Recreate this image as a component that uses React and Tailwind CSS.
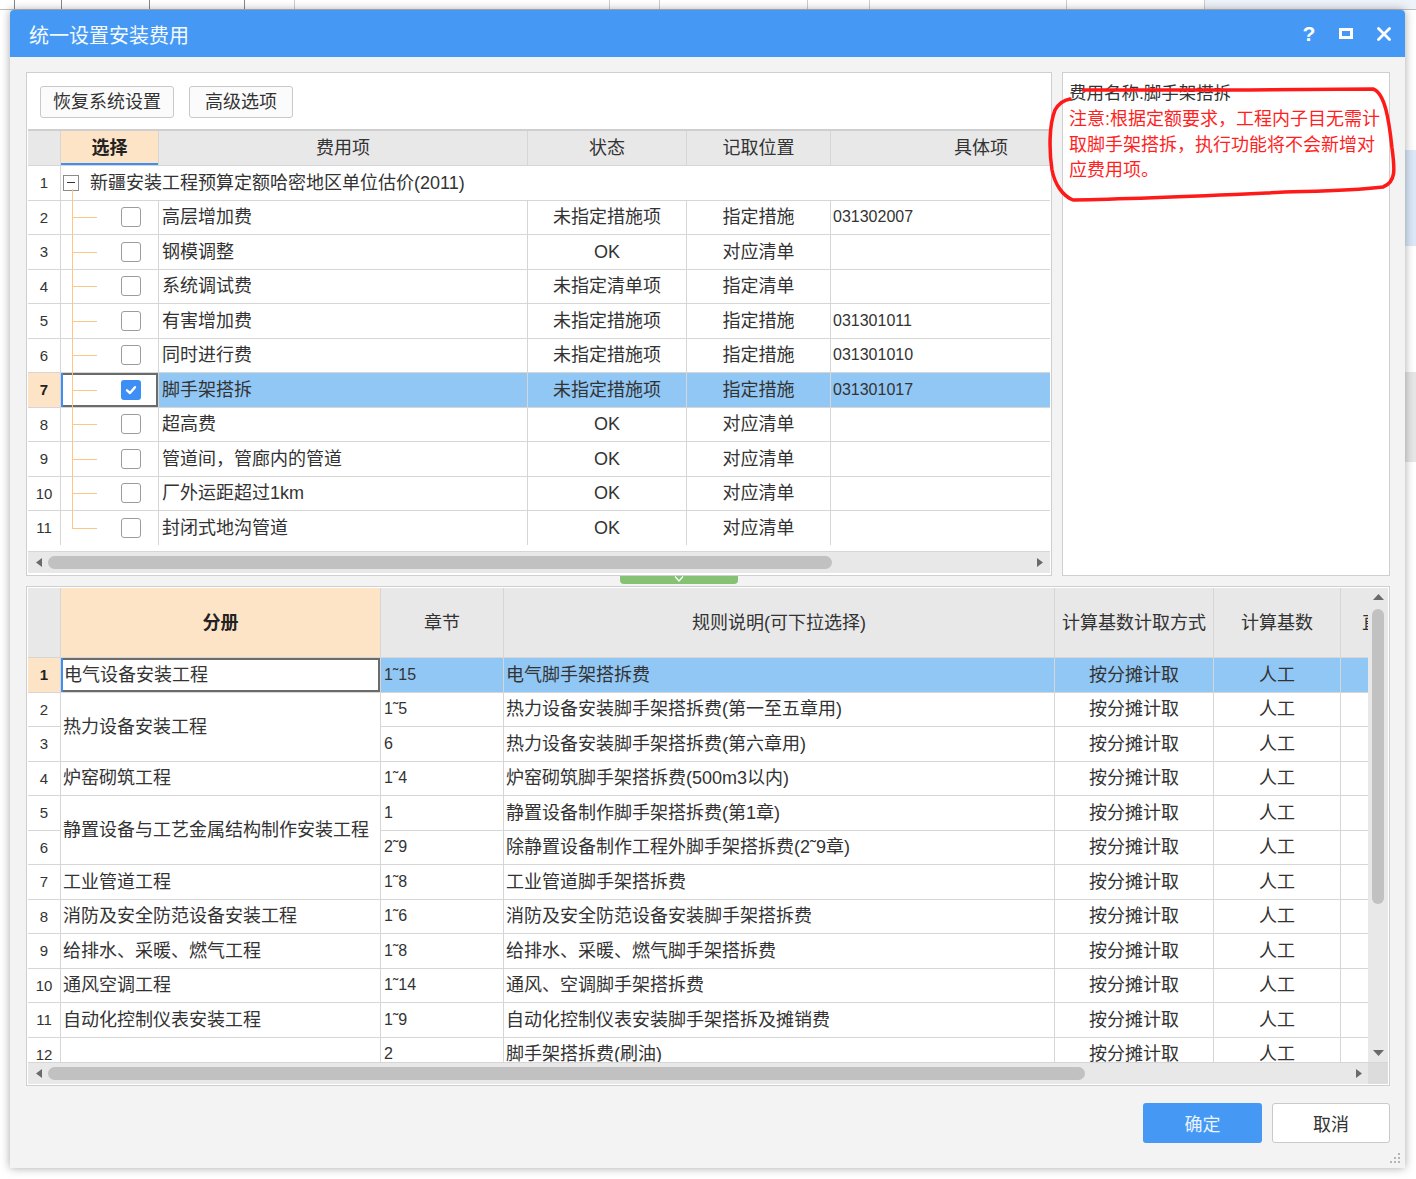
import React from "react";

const FONT = "[font-family:'Liberation_Sans','Noto_Sans_CJK_SC',sans-serif]";

const upperRows = [
  { n: 2, name: "高层增加费", status: "未指定措施项", pos: "指定措施", code: "031302007" },
  { n: 3, name: "钢模调整", status: "OK", pos: "对应清单", code: "" },
  { n: 4, name: "系统调试费", status: "未指定清单项", pos: "指定清单", code: "" },
  { n: 5, name: "有害增加费", status: "未指定措施项", pos: "指定措施", code: "031301011" },
  { n: 6, name: "同时进行费", status: "未指定措施项", pos: "指定措施", code: "031301010" },
  { n: 7, name: "脚手架搭拆", status: "未指定措施项", pos: "指定措施", code: "031301017", sel: true },
  { n: 8, name: "超高费", status: "OK", pos: "对应清单", code: "" },
  { n: 9, name: "管道间，管廊内的管道", status: "OK", pos: "对应清单", code: "" },
  { n: 10, name: "厂外运距超过1km", status: "OK", pos: "对应清单", code: "" },
  { n: 11, name: "封闭式地沟管道", status: "OK", pos: "对应清单", code: "", last: true },
];

const lowerRows = [
  { n: 1, book: "电气设备安装工程", ch: "1˜15", rule: "电气脚手架搭拆费", sel: true },
  { n: 2, book: "热力设备安装工程", span: true, ch: "1˜5", rule: "热力设备安装脚手架搭拆费(第一至五章用)" },
  { n: 3, ch: "6", rule: "热力设备安装脚手架搭拆费(第六章用)" },
  { n: 4, book: "炉窑砌筑工程", ch: "1˜4", rule: "炉窑砌筑脚手架搭拆费(500m3以内)" },
  { n: 5, book: "静置设备与工艺金属结构制作安装工程", span: true, ch: "1", rule: "静置设备制作脚手架搭拆费(第1章)" },
  { n: 6, ch: "2˜9", rule: "除静置设备制作工程外脚手架搭拆费(2˜9章)" },
  { n: 7, book: "工业管道工程", ch: "1˜8", rule: "工业管道脚手架搭拆费" },
  { n: 8, book: "消防及安全防范设备安装工程", ch: "1˜6", rule: "消防及安全防范设备安装脚手架搭拆费" },
  { n: 9, book: "给排水、采暖、燃气工程", ch: "1˜8", rule: "给排水、采暖、燃气脚手架搭拆费" },
  { n: 10, book: "通风空调工程", ch: "1˜14", rule: "通风、空调脚手架搭拆费" },
  { n: 11, book: "自动化控制仪表安装工程", ch: "1˜9", rule: "自动化控制仪表安装脚手架搭拆及摊销费" },
  { n: 12, book: "", ch: "2", rule: "脚手架搭拆费(刷油)" },
];

function Check({ checked }) {
  if (checked) {
    return (
      <div className="w-[20px] h-[20px] rounded-[3px] bg-[#3d8ef5] flex items-center justify-center">
        <svg width="14" height="14" viewBox="0 0 14 14">
          <path d="M3 7.3 L6 10 L11 4.2" stroke="white" strokeWidth="2.4" fill="none" strokeLinecap="round" strokeLinejoin="round" />
        </svg>
      </div>
    );
  }
  return <div className="w-[20px] h-[20px] rounded-[3px] border border-[#9c9c9c] bg-white" />;
}

function UpperTable() {
  return (
    <div className="overflow-hidden border-t-2 border-[#cfcfcf]">
      <div className="grid grid-cols-[32px_97px_368px_158px_143px_300px] grid-rows-[34px_repeat(11,33.5px)] gap-px bg-[#d6d6d6] w-[1103px] text-[18px] text-[#333] leading-none">
        <div className="bg-[#e8e8e8]" />
        <div className="bg-[#fde4c6] flex items-center justify-center font-bold text-[#222] shadow-[inset_0_-2px_0_#3d8ef5]">选择</div>
        <div className="bg-[#e8e8e8] flex items-center justify-center">费用项</div>
        <div className="bg-[#e8e8e8] flex items-center justify-center">状态</div>
        <div className="bg-[#e8e8e8] flex items-center justify-center">记取位置</div>
        <div className="bg-[#e8e8e8] flex items-center justify-center">具体项</div>

        <div className="bg-white flex items-center justify-center text-[15px]">1</div>
        <div className="col-span-5 bg-white relative flex items-center">
          <div className="absolute left-[11px] top-[23px] bottom-0 w-px bg-[#fcc68a]" />
          <div className="ml-[2px] w-[16px] h-[16px] border border-[#8a8a8a] bg-white flex items-center justify-center">
            <div className="w-[8px] h-px bg-[#333]" />
          </div>
          <span className="ml-[11px]">新疆安装工程预算定额哈密地区单位估价(2011)</span>
        </div>

        {upperRows.map((r) => {
          const blue = r.sel ? "bg-[#91c7f5]" : "bg-white";
          return (
            <React.Fragment key={r.n}>
              <div className={r.sel ? "bg-[#fde4c6] flex items-center justify-center text-[15px] font-bold text-[#222]" : "bg-white flex items-center justify-center text-[15px]"}>{r.n}</div>
              <div className={r.sel ? "bg-white relative shadow-[inset_2px_0_0_#3d8ef5,inset_0_0_0_2px_#6b6b6b]" : "bg-white relative"}>
                <div className={r.last ? "absolute left-[11px] top-[-1px] bottom-1/2 w-px bg-[#fcc68a]" : "absolute left-[11px] top-[-1px] -bottom-px w-px bg-[#fcc68a] z-10"} />
                <div className="absolute left-[11px] top-1/2 w-[25px] h-px bg-[#fcc68a]" />
                <div className="absolute left-[60px] top-1/2 -translate-y-1/2">
                  <Check checked={r.sel} />
                </div>
              </div>
              <div className={`${blue} flex items-center pl-[3px]`}>{r.name}</div>
              <div className={`${blue} flex items-center justify-center`}>{r.status}</div>
              <div className={`${blue} flex items-center justify-center`}>{r.pos}</div>
              <div className={`${blue} flex items-center pl-[2px] text-[16px]`}>{r.code}</div>
            </React.Fragment>
          );
        })}
      </div>
    </div>
  );
}

function LowerTable() {
  return (
    <div className="w-[1340px] h-[474px] overflow-hidden">
      <div className="grid grid-cols-[32px_319px_122px_550px_158px_126px_96px] grid-rows-[69px_repeat(12,33.5px)] gap-px bg-[#d6d6d6] w-[1409px] text-[18px] text-[#333] leading-none">
        <div className="bg-[#e8e8e8]" />
        <div className="bg-[#fde4c6] flex items-center justify-center font-bold text-[#222]">分册</div>
        <div className="bg-[#e8e8e8] flex items-center justify-center">章节</div>
        <div className="bg-[#e8e8e8] flex items-center justify-center">规则说明(可下拉选择)</div>
        <div className="bg-[#e8e8e8] flex items-center justify-center">计算基数计取方式</div>
        <div className="bg-[#e8e8e8] flex items-center justify-center">计算基数</div>
        <div className="bg-[#e8e8e8] flex items-center justify-center">直接费</div>

        {lowerRows.map((r) => {
          const bg = r.sel ? "bg-[#91c7f5]" : "bg-white";
          return (
            <React.Fragment key={r.n}>
              <div className={r.sel ? "bg-[#fde4c6] flex items-center justify-center text-[15px] font-bold text-[#222]" : "bg-white flex items-center justify-center text-[15px]"}>{r.n}</div>
              {r.book !== undefined && (
                <div className={
                  r.sel
                    ? "bg-white flex items-center pl-[3px] shadow-[inset_2px_0_0_#3d8ef5,inset_0_0_0_2px_#6b6b6b]"
                    : r.span
                    ? "bg-white flex items-center pl-[2px] row-span-2"
                    : "bg-white flex items-center pl-[2px]"
                }>{r.book}</div>
              )}
              <div className={`${bg} flex items-center pl-[3px] text-[16px]`}>{r.ch}</div>
              <div className={`${bg} flex items-center pl-[2px] whitespace-nowrap`}>{r.rule}</div>
              <div className={`${bg} flex items-center justify-center`}>按分摊计取</div>
              <div className={`${bg} flex items-center justify-center`}>人工</div>
              <div className={bg} />
            </React.Fragment>
          );
        })}
      </div>
    </div>
  );
}

export default function App() {
  return (
    <div className={`relative w-[1416px] h-[1179px] bg-white overflow-hidden ${FONT}`}>
      {/* background application fragments */}
      <div className="flex h-[10px] border-b border-[#bdbdbd]">
        <div className="w-[15px] border-r border-[#888]" />
        <div className="w-[47px] border-r border-[#888]" />
        <div className="w-[88px] border-r border-[#888]" />
        <div className="w-[95px] border-r border-[#888]" />
        <div className="w-[50px] border-r border-[#ccc]" />
        <div className="w-[315px] border-r border-[#ccc]" />
        <div className="w-[50px] border-r border-[#ccc]" />
        <div className="w-[148px] border-r border-[#ccc]" />
        <div className="w-[62px] border-r border-[#ccc]" />
        <div className="w-[197px] border-r border-[#ccc]" />
        <div className="w-[138px] border-r border-[#ccc]" />
        <div className="flex-1 bg-[#eef3fa]" />
      </div>
      <div className="absolute right-0 top-[150px] w-[12px] h-[96px] bg-[#dce8f7]" />
      <div className="absolute right-0 top-[372px] w-[12px] h-[90px] bg-[#e6e6e6]" />

      {/* dialog window */}
      <div className="absolute left-[10px] top-[10px] w-[1395px] h-[1158px] bg-[#f3f3f3] rounded-t-[4px] shadow-[0_0_10px_rgba(0,0,0,0.35)] flex flex-col">
        {/* title bar */}
        <div className="h-[47px] bg-[#4599f5] rounded-t-[4px] flex items-center pl-[19px] pr-[14px] text-white shrink-0">
          <span className="text-[20px] leading-none text-[#f4f9ff] pt-[5px]">统一设置安装费用</span>
          <div className="flex-1" />
          <span className="text-[21px] font-bold leading-none w-[20px] text-center">?</span>
          <div className="ml-[20px] w-[14px] h-[11px] border-[3px] border-white" />
          <svg className="ml-[24px]" width="14" height="14" viewBox="0 0 14 14">
            <path d="M1.5 1.5 L12.5 12.5 M12.5 1.5 L1.5 12.5" stroke="white" strokeWidth="2.8" strokeLinecap="round" />
          </svg>
        </div>

        {/* body */}
        <div className="flex-1 flex flex-col pl-[16px] pr-[15px] pt-[15px]">
          <div className="flex gap-[10px] h-[504px]">
            {/* upper left panel */}
            <div className="w-[1026px] bg-white border border-[#cfcfcf] flex flex-col px-px">
              <div className="h-[56px] flex items-start pt-[13px] pl-[12px] gap-[15px] shrink-0">
                <button className="h-[32px] w-[134px] rounded-[3px] border border-[#c9c9c9] bg-[#fbfbfb] text-[18px] text-[#333] leading-none">恢复系统设置</button>
                <button className="h-[32px] w-[104px] rounded-[3px] border border-[#c9c9c9] bg-[#fbfbfb] text-[18px] text-[#333] leading-none">高级选项</button>
              </div>
              <UpperTable />
              <div className="h-[6px]" />
              <div className="border-t border-[#d6d6d6]">
                <div className="h-[21px] bg-[#e8e8e8] flex items-center relative">
                  <svg className="absolute left-[8px] top-[6px]" width="6" height="9" viewBox="0 0 6 9">
                    <path d="M6 0 L0 4.5 L6 9 Z" fill="#6a6a6a" />
                  </svg>
                  <div className="ml-[20px] w-[784px] h-[13px] rounded-full bg-[#c1c1c1]" />
                  <svg className="absolute right-[7px] top-[6px]" width="6" height="9" viewBox="0 0 6 9">
                    <path d="M0 0 L6 4.5 L0 9 Z" fill="#6a6a6a" />
                  </svg>
                </div>
              </div>
            </div>

            {/* right note panel */}
            <div className="flex-1 bg-white border border-[#cfcfcf] pl-[6px] pt-[9px]">
              <div className="text-[17.5px] leading-[22px] text-[#333] whitespace-nowrap">费用名称:脚手架搭拆</div>
              <div className="mt-[3px] text-[18px] leading-[25.5px] text-[#ff1f1f] whitespace-nowrap">
                <div>注意:根据定额要求，工程内子目无需计</div>
                <div>取脚手架搭拆，执行功能将不会新增对</div>
                <div>应费用项。</div>
              </div>
            </div>
          </div>

          {/* splitter */}
          <div className="h-[10px] relative">
            <div className="ml-[594px] w-[118px] h-[8px] bg-[#86c273] rounded-b-[4px] flex items-start justify-center">
              <svg width="10" height="6" viewBox="0 0 10 6">
                <path d="M1 0.5 L5 5 L9 0.5" stroke="white" strokeWidth="1.2" fill="none" />
              </svg>
            </div>
          </div>

          {/* lower panel */}
          <div className="h-[500px] bg-white border border-[#cfcfcf] p-px flex flex-col">
            <div className="flex">
              <LowerTable />
              <div className="w-[20px] h-[474px] bg-[#e8e8e8] relative flex flex-col items-center">
                <svg className="mt-[6px]" width="11" height="6" viewBox="0 0 11 6">
                  <path d="M0 6 L5.5 0 L11 6 Z" fill="#6a6a6a" />
                </svg>
                <div className="mt-[9px] w-[12px] h-[295px] rounded-full bg-[#c1c1c1]" />
                <div className="flex-1" />
                <svg className="mb-[6px]" width="11" height="6" viewBox="0 0 11 6">
                  <path d="M0 0 L5.5 6 L11 0 Z" fill="#6a6a6a" />
                </svg>
              </div>
            </div>
            <div className="flex border-t border-[#d6d6d6]">
              <div className="w-[1340px] h-[21px] bg-[#e8e8e8] flex items-center relative">
                <svg className="absolute left-[8px] top-[6px]" width="6" height="9" viewBox="0 0 6 9">
                  <path d="M6 0 L0 4.5 L6 9 Z" fill="#6a6a6a" />
                </svg>
                <div className="ml-[20px] w-[1037px] h-[13px] rounded-full bg-[#c1c1c1]" />
                <svg className="absolute right-[6px] top-[6px]" width="6" height="9" viewBox="0 0 6 9">
                  <path d="M0 0 L6 4.5 L0 9 Z" fill="#6a6a6a" />
                </svg>
              </div>
              <div className="w-[20px] h-[21px] bg-[#dcdcdc]" />
            </div>
          </div>

          {/* buttons */}
          <div className="flex justify-end gap-[10px] pt-[17px]">
            <button className="w-[119px] h-[40px] rounded-[3px] bg-[#4599f5] text-[18px] text-[#eaf3ff] leading-none pt-[3px]">确定</button>
            <button className="w-[118px] h-[40px] rounded-[3px] bg-white border border-[#c9c9c9] text-[18px] text-[#333] leading-none pt-[3px]">取消</button>
          </div>
        </div>

        {/* resize grip */}
        <svg className="absolute right-[5px] bottom-[5px]" width="10" height="10" viewBox="0 0 10 10">
          <rect x="8" y="0" width="2" height="2" fill="#b5b5b5" />
          <rect x="4" y="4" width="2" height="2" fill="#b5b5b5" />
          <rect x="8" y="4" width="2" height="2" fill="#b5b5b5" />
          <rect x="0" y="8" width="2" height="2" fill="#b5b5b5" />
          <rect x="4" y="8" width="2" height="2" fill="#b5b5b5" />
          <rect x="8" y="8" width="2" height="2" fill="#b5b5b5" />
        </svg>
      </div>

      {/* red freehand annotation */}
      <svg className="absolute left-0 top-0 pointer-events-none" width="1416" height="1179" viewBox="0 0 1416 1179">
        <path
          d="M1083,90 L1250,90 L1373,89 C1385,93 1389,120 1392,148 C1395,170 1396,182 1383,187 C1340,192 1300,191 1267,193 C1200,196 1130,199 1073,200 C1063,196 1055,185 1052,170 C1049,150 1049,125 1055,110 C1059,103 1064,100 1070,99"
          stroke="#ff1a1a"
          strokeWidth="3.5"
          fill="none"
          strokeLinecap="round"
          strokeLinejoin="round"
        />
      </svg>
    </div>
  );
}
